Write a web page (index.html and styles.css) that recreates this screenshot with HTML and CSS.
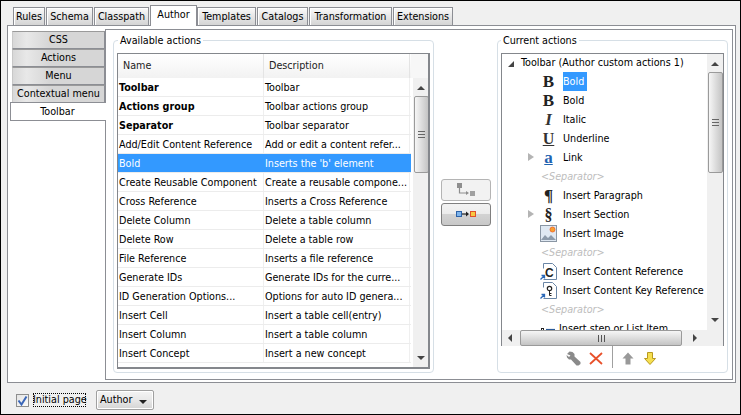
FILE: index.html
```html
<!DOCTYPE html>
<html lang="en">
<head>
<meta charset="utf-8">
<title>Author actions</title>
<link rel="stylesheet" href="styles.css">
</head>
<body>
<div class="window">
  <div class="tabs">
    <div class="tab w-rules">Rules</div>
    <div class="tab w-schema">Schema</div>
    <div class="tab w-classpath">Classpath</div>
    <div class="tab active w-author">Author</div>
    <div class="tab w-templates">Templates</div>
    <div class="tab w-catalogs">Catalogs</div>
    <div class="tab w-transformation">Transformation</div>
    <div class="tab w-extensions">Extensions</div>
  </div>
  <div class="panel">
    <div class="side">
      <div class="side-tab">CSS</div>
      <div class="side-tab">Actions</div>
      <div class="side-tab">Menu</div>
      <div class="side-tab">Contextual menu</div>
      <div class="side-tab active">Toolbar</div>
    </div>
    <div class="inner">
      <fieldset class="group group-left">
        <legend>Available actions</legend>
        <div class="table-box">
          <div class="table-main">
            <div class="thead"><div class="th">Name</div><div class="th">Description</div></div>
            <div class="row"><div class="cell bold">Toolbar</div><div class="cell">Toolbar</div></div>
            <div class="row"><div class="cell bold">Actions group</div><div class="cell">Toolbar actions group</div></div>
            <div class="row"><div class="cell bold">Separator</div><div class="cell">Toolbar separator</div></div>
            <div class="row"><div class="cell">Add/Edit Content Reference</div><div class="cell">Add or edit a content refer...</div></div>
            <div class="row selected"><div class="cell">Bold</div><div class="cell">Inserts the 'b' element</div></div>
            <div class="row"><div class="cell">Create Reusable Component</div><div class="cell">Create a reusable compone...</div></div>
            <div class="row"><div class="cell">Cross Reference</div><div class="cell">Inserts a Cross Reference</div></div>
            <div class="row"><div class="cell">Delete Column</div><div class="cell">Delete a table column</div></div>
            <div class="row"><div class="cell">Delete Row</div><div class="cell">Delete a table row</div></div>
            <div class="row"><div class="cell">File Reference</div><div class="cell">Inserts a file reference</div></div>
            <div class="row"><div class="cell">Generate IDs</div><div class="cell">Generate IDs for the curre...</div></div>
            <div class="row"><div class="cell">ID Generation Options...</div><div class="cell">Options for auto ID genera...</div></div>
            <div class="row"><div class="cell">Insert Cell</div><div class="cell">Insert a table cell(entry)</div></div>
            <div class="row"><div class="cell">Insert Column</div><div class="cell">Insert a table column</div></div>
            <div class="row"><div class="cell">Insert Concept</div><div class="cell">Insert a new concept</div></div>
          </div>
          <div class="table-scroll">
            <div class="corner"></div>
            <div class="vbar vbar-table">
              <span class="arr arr-up"></span>
              <div class="thumb-v thumb-table"><span class="grip-h"></span></div>
              <span class="arr arr-down"></span>
            </div>
          </div>
        </div>
      </fieldset>

      <div class="mid">
        <button class="mid-btn disabled" aria-label="Remove">
          <svg width="20" height="16" viewBox="0 0 20 16"><rect x="1" y="1" width="5" height="5" fill="#8e8e8e"/><path d="M3.5 6v5h7" fill="none" stroke="#8e8e8e" stroke-width="1.2"/><path d="M10 9l3 2-3 2z" fill="#8e8e8e"/><rect x="14" y="9" width="5" height="5" fill="#a0a0a0"/></svg>
        </button>
        <button class="mid-btn" aria-label="Add">
          <svg width="20" height="10" viewBox="0 0 20 10"><rect x="0.5" y="1.5" width="5" height="5" fill="#7db4ec" stroke="#2c62a8"/><path d="M6 4h5" stroke="#222" stroke-width="1.200"/><path d="M10 1.500l3 2.500-3 2.500z" fill="#222"/><rect x="14.500" y="1.500" width="5" height="5" fill="#f8c840" stroke="#e0502a"/></svg>
        </button>
      </div>

      <fieldset class="group group-right">
        <legend>Current actions</legend>
        <div class="tree-box">
          <div class="tree-top">
            <div class="tree">
              <div class="node root"><span class="exp-open"></span><span>Toolbar (Author custom actions 1)</span></div>
              <div class="node"><span class="ico glyph-b">B</span><span class="lbl sel">Bold</span></div>
              <div class="node"><span class="ico glyph-b">B</span><span class="lbl">Bold</span></div>
              <div class="node"><span class="ico glyph-i">I</span><span class="lbl">Italic</span></div>
              <div class="node"><span class="ico glyph-u">U</span><span class="lbl">Underline</span></div>
              <div class="node"><span class="exp"></span><span class="ico glyph-a">a</span><span class="lbl">Link</span></div>
              <div class="node sep">&lt;Separator&gt;</div>
              <div class="node"><span class="ico glyph-p">¶</span><span class="lbl">Insert Paragraph</span></div>
              <div class="node"><span class="exp"></span><span class="ico glyph-s">§</span><span class="lbl">Insert Section</span></div>
              <div class="node"><span class="ico">
                <svg width="17" height="17" viewBox="0 0 17 17"><rect x="0.500" y="0.500" width="16" height="16" fill="#dfe8f2" stroke="#8a96a4"/><path d="M1 15l4-5 3 3 3-3 5 5z" fill="#8c9aaa"/><circle cx="12.500" cy="4.500" r="2.500" fill="#f6a030" stroke="#f06020" stroke-width="0.800"/></svg>
              </span><span class="lbl">Insert Image</span></div>
              <div class="node sep">&lt;Separator&gt;</div>
              <div class="node"><span class="ico">
                <svg width="17" height="17" viewBox="0 0 17 17"><path d="M3.500 5.500V0.500h9l4 4v12h-13" fill="#fff" stroke="#6a86a6"/><text x="5" y="14" class="ico-text">C</text><path d="M0.500 16.500l4-4M1.500 12.500h3v3" fill="none" stroke="#2a68b8" stroke-width="1.300"/></svg>
              </span><span class="lbl">Insert Content Reference</span></div>
              <div class="node"><span class="ico">
                <svg width="17" height="17" viewBox="0 0 17 17"><path d="M3.500 5.500V0.500h9l4 4v12h-13" fill="#fff" stroke="#6a86a6"/><circle cx="9.500" cy="6.500" r="2.200" fill="none" stroke="#222" stroke-width="1.200"/><path d="M9.500 9v4.500h2M9.500 11.500h2" fill="none" stroke="#222"/><path d="M0.500 16.500l4-4M1.500 12.500h3v3" fill="none" stroke="#2a68b8" stroke-width="1.300"/></svg>
              </span><span class="lbl">Insert Content Key Reference</span></div>
              <div class="node sep">&lt;Separator&gt;</div>
              <div class="node last"><span class="ico-list">
                <svg width="14" height="8" viewBox="0 0 14 8"><rect x="0.500" y="1.500" width="2" height="2" fill="#fff" stroke="#222"/><path d="M5 2.500h9" stroke="#2a5a98" stroke-width="1.200"/><path d="M5 7h9" stroke="#2a5a98" stroke-width="1.200"/></svg>
              </span><span>Insert step or List Item</span></div>
            </div>
            <div class="vbar vbar-tree">
              <span class="arr arr-up"></span>
              <div class="thumb-v thumb-tree"><span class="grip-h"></span></div>
              <span class="arr arr-down"></span>
            </div>
          </div>
          <div class="hbar">
            <span class="arr arr-left"></span>
            <div class="thumb-h"><span class="grip-v"></span></div>
            <span class="arr arr-right"></span>
          </div>
        </div>
        <div class="tree-tools">
          <svg class="tool" width="15" height="15" viewBox="0 0 15 15"><path d="M1 3L3.500 0.500 6.500 1 8.500 3 8.500 5.500 14.500 11 14.500 13 12.500 14.500 10.500 14.500 5 8.500 3 8.500 1 6.500 0.500 4 3 6 4.500 4.500z" fill="#8a8a8a"/></svg>
          <svg class="tool" width="14" height="13" viewBox="0 0 14 13"><path d="M1 1l12 11M13 1L1 12" stroke="#e8502a" stroke-width="1.800" fill="none"/></svg>
          <span class="tool-sep"></span>
          <svg class="tool" width="12" height="13" viewBox="0 0 12 13"><path d="M6 0.500l5.500 6H8.500v6h-5v-6H0.500z" fill="#999"/></svg>
          <svg class="tool" width="12" height="13" viewBox="0 0 12 13"><path d="M3.500 0.500h5v6h3l-5.500 6-5.500-6h3z" fill="#f6df50" stroke="#b89a20"/></svg>
        </div>
      </fieldset>
    </div>
  </div>
  <div class="footer">
    <span class="check"><svg width="11" height="11" viewBox="0 0 11 11"><path d="M1.500 5.500l3 4 5-8" fill="none" stroke="#3a66b8" stroke-width="2"/></svg></span>
    <span class="check-label">Initial page</span>
    <div class="combo"><span>Author</span><span class="combo-arrow"></span></div>
  </div>
</div>
</body>
</html>
```
FILE: styles.css
```css
* { box-sizing: border-box; }
html, body { margin: 0; padding: 0; }
body { width: 741px; height: 415px; overflow: hidden; font-family: "DejaVu Sans Condensed", "DejaVu Sans", sans-serif; font-size: 10.7px; color: #000; }
.window { width: 741px; height: 415px; border: 1px solid #000; background: #f0f0f0; display: flex; flex-direction: column; }

/* top tabs */
.tabs { display: flex; height: 24px; padding-left: 12px; align-items: flex-end; flex: none; position: relative; z-index: 2; }
.tab { height: 18px; border: 1px solid #8c8e94; border-bottom: none; margin-right: 1px; background: linear-gradient(#fafafa, #e8e8e8 45%, #d4d4d4); box-shadow: inset 1px 1px 0 #fff; line-height: 17px; text-align: center; flex: none; }
.tab.active { height: 21px; margin-right: 0; margin-bottom: -1px; background: #fff; line-height: 17px; padding-bottom: 3px; box-shadow: none; }
.w-rules { width: 32px; }
.w-schema { width: 47px; }
.w-classpath { width: 55px; }
.w-author { width: 47px; margin-left: 0; }
.w-templates { width: 59px; }
.w-catalogs { width: 51px; }
.w-transformation { width: 83px; }
.w-extensions { width: 60px; }

/* main panel */
.panel { margin: 0 4px 0 6px; height: 358px; flex: none; border: 1px solid #8c8e94; background: #fff; padding: 3px 2px 2px 2px; display: flex; }
.side { width: 97px; flex: none; padding-top: 2px; display: flex; flex-direction: column; position: relative; z-index: 1; }
.side-tab { height: 18px; margin-left: 2px; width: 93px; border: 1px solid #8c8e94; border-left-color: #c8c8c8; border-top-color: #9a9a9a; background: linear-gradient(90deg, #d8d8d8, #e8e8e8 15%, #d6d6d6 40%, #d6d6d6); text-align: center; line-height: 15px; margin-bottom: 0; }
.side-tab.active { height: 19px; margin-left: 0; margin-top: -1px; width: 96px; background: #fff; border: 1px solid #8c8e94; border-right: none; line-height: 18px; text-align: center; padding-right: 2px; }
.inner { flex: 1; margin-left: -2px; border: 1px solid #8c8e94; background: #fff; padding: 4px 4px 4px 7px; display: flex; min-width: 0; }

/* groups */
.group { margin: 0; padding: 0 3px 0 3px; border: 1px solid #d6dfe6; border-radius: 4px; min-width: 0; height: 339px; flex: none; }
.group legend { padding: 0 2px; line-height: 13px; }
.group-left legend { margin-left: 1px; }
.group-left { width: 321px; padding-top: 6px; }
.group-right { width: 231px; padding-top: 6px; }

/* table */
.table-box { width: 313px; height: 316px; border: 1px solid #84878c; border-width: 1px 2px 2px 1px; display: flex; overflow: hidden; }
.table-main { width: 293px; flex: none; }
.thead { display: flex; height: 24px; background: linear-gradient(#fff, #f2f2f2); }
.th { width: 146px; padding-left: 5px; line-height: 23px; border-right: 1px solid #e4e4e4; color: #222; }
.row { display: flex; height: 19px; border-bottom: 1px solid #ececec; }
.cell { width: 146px; padding-left: 1px; line-height: 19px; white-space: nowrap; overflow: hidden; border-right: 1px solid #efefef; }
.cell.bold { font-weight: bold; }
.row.selected { background: #3399ff; color: #fff; }
.row.selected .cell { border-right-color: #3399ff; }
.table-scroll { width: 18px; flex: none; }
.corner { height: 24px; background: #f7f7f7; }

/* scrollbars */
.vbar { width: 16px; background: #f0f0f0; display: flex; flex-direction: column; align-items: center; }
.vbar-table { margin-left: 2px; height: 289px; }
.vbar-tree { height: 276px; }
.arr { display: block; width: 0; height: 0; flex: none; border-style: solid; border-color: transparent; }
.arr-up { border-width: 0 4px 4px; border-bottom-color: #444; margin: 8px 0 6px; }
.arr-down { border-width: 4px 4px 0; border-top-color: #444; margin-top: auto; margin-bottom: 7px; }
.vbar-tree .arr-down { margin-bottom: 8px; }
.arr-left { border-width: 4px 4px 4px 0; border-right-color: #444; margin-left: 6px; }
.arr-right { border-width: 4px 0 4px 4px; border-left-color: #444; margin-left: 11px; }
.thumb-v { width: 15px; border: 1px solid #9a9a9a; border-radius: 2px; background: linear-gradient(90deg, #f6f6f6, #e2e2e2 40%, #c4c4c4); display: flex; align-items: center; justify-content: center; flex: none; }
.thumb-table { height: 77px; }
.thumb-tree { height: 101px; }
.grip-h { width: 7px; height: 7px; background: repeating-linear-gradient(#666 0 1px, transparent 1px 3px); }
.hbar { height: 16px; background: #f0f0f0; display: flex; align-items: center; }
.thumb-h { width: 162px; height: 16px; margin-left: 8px; border: 1px solid #9a9a9a; border-radius: 2px; background: linear-gradient(#f6f6f6, #e2e2e2 40%, #c4c4c4); display: flex; align-items: center; justify-content: center; flex: none; }
.grip-v { width: 7px; height: 7px; background: repeating-linear-gradient(90deg, #555 0 1px, transparent 1px 3px); }

/* middle buttons */
.mid { width: 63px; flex: none; display: flex; flex-direction: column; gap: 2px; padding: 145px 0 0 7px; }
.mid-btn { width: 50px; height: 23px; padding: 0; border: 1px solid #7f7f7f; border-radius: 3px; background: linear-gradient(#f2f2f2, #ececec 45%, #d2d2d2 50%, #c8c8c8); display: flex; align-items: center; justify-content: center; }
.mid-btn.disabled { height: 22px; border-color: #b4b4b4; background: #f2f2f2; }

/* tree */
.tree-box { width: 223px; height: 293px; border: 1px solid #84878c; display: flex; flex-direction: column; }
.tree-top { display: flex; height: 276px; flex: none; }
.tree { width: 205px; flex: none; overflow: hidden; }
.node { height: 19px; position: relative; line-height: 19px; padding-left: 61px; white-space: nowrap; display: flex; }
.node.root { padding-left: 19px; height: 18px; line-height: 18px; }
.node.sep { padding-left: 39px; color: #bdbdbd; font-style: italic; }
.node.last { padding-left: 39px; gap: 4px; align-items: center; }
.lbl { height: 19px; }
.lbl.sel { background: #3399ff; color: #fff; padding-right: 3px; }
.ico { position: absolute; left: 38px; width: 17px; height: 19px; display: flex; align-items: center; justify-content: center; font-family: "Liberation Serif", serif; }
.ico-list { width: 14px; height: 8px; display: flex; flex: none; margin-top: 4px; }
.glyph-b { font-size: 17px; font-weight: bold; color: #222; }
.glyph-i { font-size: 17px; font-weight: bold; font-style: italic; color: #333; }
.glyph-u { font-size: 16px; font-weight: bold; color: #333; text-decoration: underline; }
.glyph-a { font-size: 17px; font-weight: bold; color: #1f63b0; text-decoration: underline; }
.glyph-p { font-size: 17px; font-weight: bold; color: #222; }
.glyph-s { font-size: 16px; font-weight: bold; color: #222; }
.ico-text { font-family: "Liberation Sans", sans-serif; font-size: 12px; font-weight: bold; fill: #222; }
.exp, .exp-open { position: absolute; width: 0; height: 0; }
.exp { left: 26px; top: 5px; border-style: solid; border-width: 4.500px 0 4.500px 6px; border-color: transparent transparent transparent #b4b4b4; }
.exp-open { left: 6px; top: 7px; border-style: solid; border-width: 0 0 6px 6px; border-color: transparent transparent #444 transparent; }

/* tools below the tree */
.tree-tools { height: 24px; display: flex; align-items: center; padding-left: 65px; }
.tool { flex: none; }
.tool:nth-child(2) { margin-left: 8px; }
.tool-sep { width: 1px; height: 22px; background: #a0a0a0; margin: 0 9px 0 9px; align-self: flex-start; }
.tool:nth-child(4) { margin-right: 10px; }

/* footer */
.footer { flex: 1; display: flex; align-items: flex-start; padding-left: 15px; position: relative; }
.check { width: 13px; height: 13px; margin-top: 11px; border: 1px solid #8e8e8e; background: linear-gradient(135deg, #e4e4e4, #fafafa); display: flex; align-items: center; justify-content: center; flex: none; }
.check-label { margin: 10px 0 0 4px; height: 14px; width: 53px; line-height: 13px; outline: 1px dotted #000; outline-offset: -1px; white-space: nowrap; flex: none; }
.combo { margin: 7px 0 0 10px; width: 58px; height: 20px; border: 1px solid #a0a0a0; border-radius: 2px; background: linear-gradient(#f4f4f4, #e8e8e8 50%, #d4d4d4); display: flex; align-items: center; padding-left: 3px; line-height: 18px; box-shadow: inset 0 0 0 1px #fff; }
.combo-arrow { width: 0; height: 0; margin-left: auto; margin-right: 6px; margin-top: 3px; border-style: solid; border-width: 4px 4px 0; border-color: #222 transparent transparent; }
```
